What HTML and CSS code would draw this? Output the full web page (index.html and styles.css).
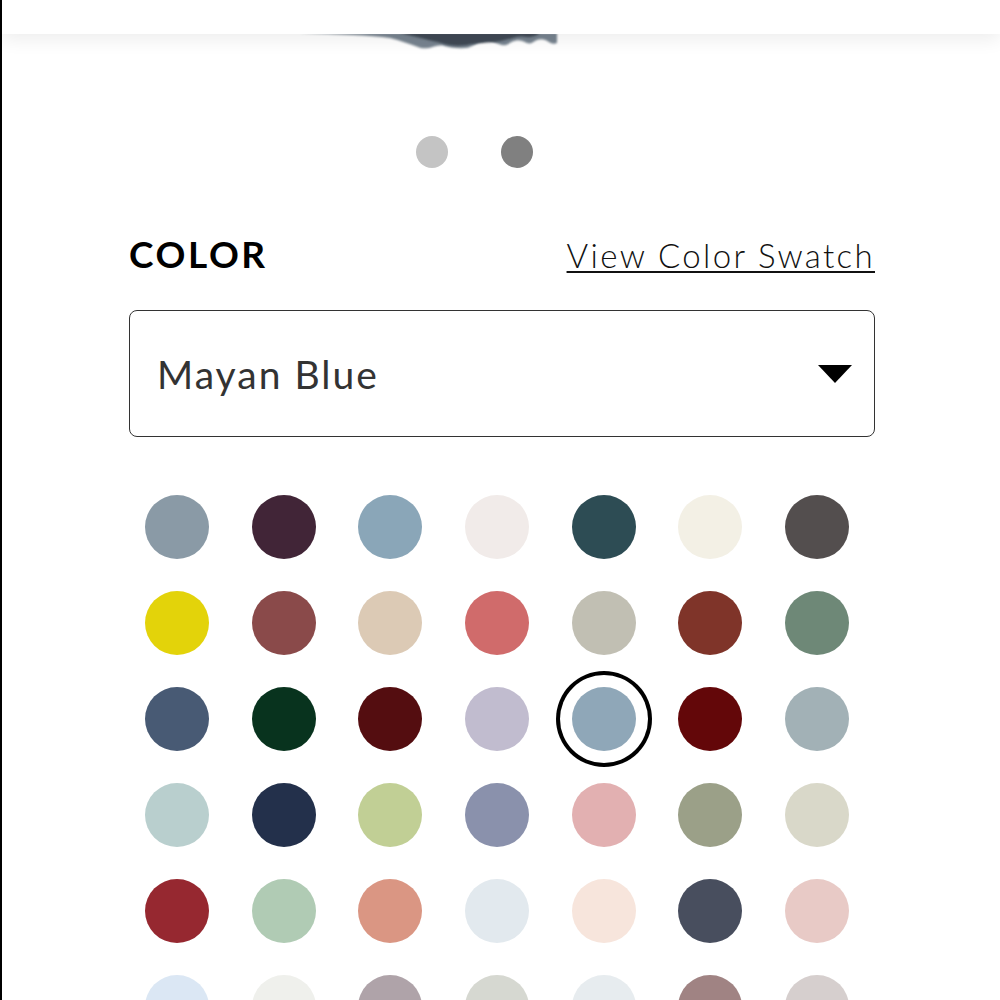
FILE: index.html
```html
<!DOCTYPE html>
<html>
<head>
<meta charset="utf-8">
<link rel="stylesheet" href="styles.css">
</head>
<body>
<div class="page">
  <div class="hero">
    <svg class="blob" width="262" height="22" viewBox="0 0 262 18" preserveAspectRatio="none">
      <defs>
        <filter id="soft" x="-10%" y="-50%" width="120%" height="200%">
          <feGaussianBlur stdDeviation="0.9"/>
        </filter>
      </defs>
      <path filter="url(#soft)" d="M0 0 L257 0 L257 8 C254 10 250 8 246 6 C240 4 236 6 232 8 C228 10 224 6 218 6 C212 6 208 10 204 10 C198 10 192 6 186 6 C180 6 176 10 168 12 C160 13 150 12 142 10 C134 10 128 14 120 12 C110 9 100 6 90 4 C70 2 40 1 0 0 Z" fill="#77838f"/>
      <path filter="url(#soft)" d="M100 0 L240 0 C236 3 230 4 224 3 C216 2 208 6 198 7 C188 8 178 8 166 10 C156 11 148 10 140 8 C130 6 120 4 100 0 Z" fill="#3f4a55"/>
    </svg>
  </div>
  <header class="topbar"></header>
  <div class="dots">
    <span class="dot dot-light"></span>
    <span class="dot dot-dark"></span>
  </div>
  <section class="color-section">
    <div class="color-head">
      <h2 class="color-title">COLOR</h2>
      <a class="swatch-link" href="#">View Color Swatch</a>
    </div>
    <div class="select">
      <span class="select-value">Mayan Blue</span>
      <span class="select-arrow"></span>
    </div>
    <div class="swatches">
      <span class="sw" style="background:#8a9aa6"></span>
      <span class="sw" style="background:#412537"></span>
      <span class="sw" style="background:#8aa6b8"></span>
      <span class="sw" style="background:#f1ebe9"></span>
      <span class="sw" style="background:#2d4c54"></span>
      <span class="sw" style="background:#f3f0e5"></span>
      <span class="sw" style="background:#534e4e"></span>

      <span class="sw" style="background:#e3d30a"></span>
      <span class="sw" style="background:#8a4a4a"></span>
      <span class="sw" style="background:#dccab5"></span>
      <span class="sw" style="background:#d06b6b"></span>
      <span class="sw" style="background:#c1bfb3"></span>
      <span class="sw" style="background:#7f3429"></span>
      <span class="sw" style="background:#6e8877"></span>

      <span class="sw" style="background:#485a74"></span>
      <span class="sw" style="background:#08331e"></span>
      <span class="sw" style="background:#540d10"></span>
      <span class="sw" style="background:#c1bccf"></span>
      <span class="sw sw-selected" style="background:#8fa7b8"></span>
      <span class="sw" style="background:#630709"></span>
      <span class="sw" style="background:#a2b1b6"></span>

      <span class="sw" style="background:#b9cfce"></span>
      <span class="sw" style="background:#23304b"></span>
      <span class="sw" style="background:#c1cf95"></span>
      <span class="sw" style="background:#8a91ac"></span>
      <span class="sw" style="background:#e2b0b1"></span>
      <span class="sw" style="background:#9ba088"></span>
      <span class="sw" style="background:#d9d8c9"></span>

      <span class="sw" style="background:#962830"></span>
      <span class="sw" style="background:#b0cbb4"></span>
      <span class="sw" style="background:#da9683"></span>
      <span class="sw" style="background:#e2e9ee"></span>
      <span class="sw" style="background:#f7e5dc"></span>
      <span class="sw" style="background:#484e5e"></span>
      <span class="sw" style="background:#e8cac6"></span>

      <span class="sw" style="background:#dbe7f4"></span>
      <span class="sw" style="background:#eff0ec"></span>
      <span class="sw" style="background:#afa3a9"></span>
      <span class="sw" style="background:#d6d8d1"></span>
      <span class="sw" style="background:#e7ecef"></span>
      <span class="sw" style="background:#a08383"></span>
      <span class="sw" style="background:#d6cfce"></span>
    </div>
  </section>
</div>
</body>
</html>
```
FILE: styles.css
```css
* { box-sizing: border-box; }
html, body { margin: 0; padding: 0; background: #fff; }
body { font-family: Lato, "Liberation Sans", sans-serif; overflow: hidden; }

.page {
  position: relative;
  border-left: 2px solid #000;
  height: 1000px;
  overflow: hidden;
  background: #fff;
}

.hero {
  position: relative;
  height: 34px;
  background: #fff;
}
.blob {
  position: absolute;
  left: 298px;
  top: 33px;
}
.topbar {
  position: absolute;
  left: 0; right: 0; top: 0;
  height: 34px;
  background: #fff;
  box-shadow: 0 6px 18px rgba(0,0,0,0.07);
  z-index: 2;
}

.dots {
  display: flex;
  gap: 53px;
  padding-left: 414px;
  margin-top: 102px;
}
.dot {
  width: 32px;
  height: 32px;
  border-radius: 50%;
}
.dot-light { background: #c4c4c4; }
.dot-dark { background: #808080; }

.color-section {
  padding: 0 125px 0 127px;
}
.color-head {
  display: flex;
  justify-content: space-between;
  align-items: baseline;
  margin-top: 58px;
  height: 56px;
}
.color-title {
  margin: 0;
  font-size: 37px;
  font-weight: 700;
  color: #000;
  letter-spacing: 2.6px;
  line-height: 56px;
}
.swatch-link {
  font-size: 33px;
  font-weight: 300;
  color: #111;
  text-decoration: underline;
  text-underline-offset: 3px;
  text-decoration-thickness: 2px;
  letter-spacing: 2.35px;
  line-height: 56px;
}

.select {
  margin-top: 28px;
  height: 127px;
  border: 1.5px solid #333;
  border-radius: 8px;
  display: flex;
  align-items: center;
  justify-content: space-between;
  padding: 0 22px 0 27px;
}
.select-value {
  font-size: 39px;
  color: #333;
  font-weight: 400;
  letter-spacing: 2px;
}
.select-arrow {
  width: 0;
  height: 0;
  border-left: 17px solid transparent;
  border-right: 17px solid transparent;
  border-top: 18px solid #000;
}

.swatches {
  margin: 42px 5px 0 -5px;
  display: grid;
  grid-template-columns: repeat(7, 1fr);
  grid-auto-rows: 96px;
  place-items: center;
}
.sw {
  width: 64px;
  height: 64px;
  border-radius: 50%;
  display: block;
}
.sw-selected {
  box-shadow: 0 0 0 12px #fff, 0 0 0 16px #000;
}
```
